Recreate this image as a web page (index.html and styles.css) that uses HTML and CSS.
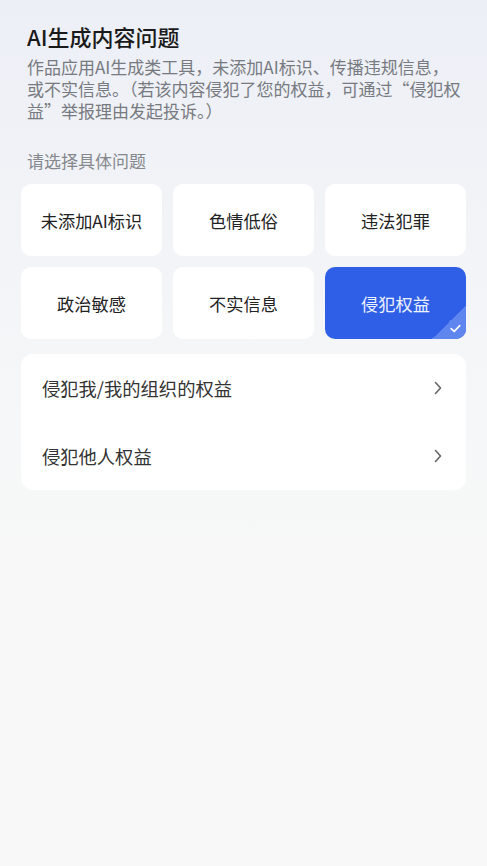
FILE: index.html
```html
<!DOCTYPE html>
<html lang="zh-CN">
<head>
<meta charset="utf-8">
<title>AI生成内容问题</title>
<link rel="stylesheet" href="styles.css">
</head>
<body>
<div class="page">
  <header class="head">
    <h1 class="title">AI生成内容问题</h1>
    <p class="desc"><span class="ln">作品应用AI生成类工具，未添加AI标识、传播违规信息，</span><span class="ln">或不实信息。（若该内容侵犯了您的权益，可通过“侵犯权</span><span class="ln">益”举报理由发起投诉。）</span></p>
    <p class="sub">请选择具体问题</p>
  </header>
  <div class="grid">
    <div class="opt">未添加AI标识</div>
    <div class="opt">色情低俗</div>
    <div class="opt">违法犯罪</div>
    <div class="opt">政治敏感</div>
    <div class="opt">不实信息</div>
    <div class="opt opt-on">侵犯权益
      <span class="corner">
        <svg class="tick" width="11" height="9" viewBox="0 0 11 9"><path d="M1.2 4.6 L4.2 7.4 L9.8 1.6" fill="none" stroke="#ffffff" stroke-width="1.6" stroke-linecap="round" stroke-linejoin="round"/></svg>
      </span>
    </div>
  </div>
  <div class="list">
    <div class="row"><span class="row-text">侵犯我/我的组织的权益</span><svg class="chev" width="8" height="14" viewBox="0 0 8 14"><path d="M1.5 1.5 L6.5 7 L1.5 12.5" fill="none" stroke="#666" stroke-width="1.6" stroke-linecap="round" stroke-linejoin="round"/></svg></div>
    <div class="row"><span class="row-text">侵犯他人权益</span><svg class="chev" width="8" height="14" viewBox="0 0 8 14"><path d="M1.5 1.5 L6.5 7 L1.5 12.5" fill="none" stroke="#666" stroke-width="1.6" stroke-linecap="round" stroke-linejoin="round"/></svg></div>
  </div>
</div>
</body>
</html>
```
FILE: styles.css
```css
html, body {
  margin: 0;
  padding: 0;
}
body {
  width: 487px;
  min-height: 866px;
  background: linear-gradient(180deg, #eceff6 0px, #f1f3f7 200px, #f6f7f8 420px, #f8f8f8 600px);
  font-family: "Noto Sans CJK SC", "Noto Sans", sans-serif;
  color: #222;
}
.page {
  padding: 0 21px;
}
.head {
  padding: 21px 6px 0 6px;
}
.title {
  margin: 0;
  font-size: 22px;
  line-height: 30px;
  font-weight: 500;
  color: #1a1a1a;
}
.desc {
  margin: 5px 0 0 0;
  font-size: 17px;
  line-height: 22px;
  color: #777a80;
}
.ln {
  display: block;
  white-space: nowrap;
}
.sub {
  margin: 28px 0 0 0;
  font-size: 17px;
  line-height: 22px;
  color: #85888d;
}
.grid {
  margin-top: 12px;
  display: grid;
  grid-template-columns: repeat(3, 1fr);
  column-gap: 11px;
  row-gap: 11px;
}
.opt {
  position: relative;
  height: 72px;
  border-radius: 10px;
  background: #ffffff;
  display: flex;
  align-items: center;
  justify-content: center;
  font-size: 17.2px;
  color: #222;
  overflow: hidden;
}
.opt-on {
  background: #2f5fe6;
  color: #eef2fd;
}
.corner {
  position: absolute;
  right: 0;
  bottom: 0;
  width: 34px;
  height: 34px;
  background: linear-gradient(135deg, transparent 50%, #5f86ee 50%);
}
.tick {
  position: absolute;
  right: 5px;
  bottom: 6px;
}
.list {
  margin-top: 15px;
  background: #ffffff;
  border-radius: 12px;
}
.row {
  height: 68px;
  display: flex;
  align-items: center;
  justify-content: space-between;
  padding: 0 24px 0 21px;
}
.row-text {
  font-size: 18.3px;
  color: #333;
}
.chev {
  display: block;
}
```
